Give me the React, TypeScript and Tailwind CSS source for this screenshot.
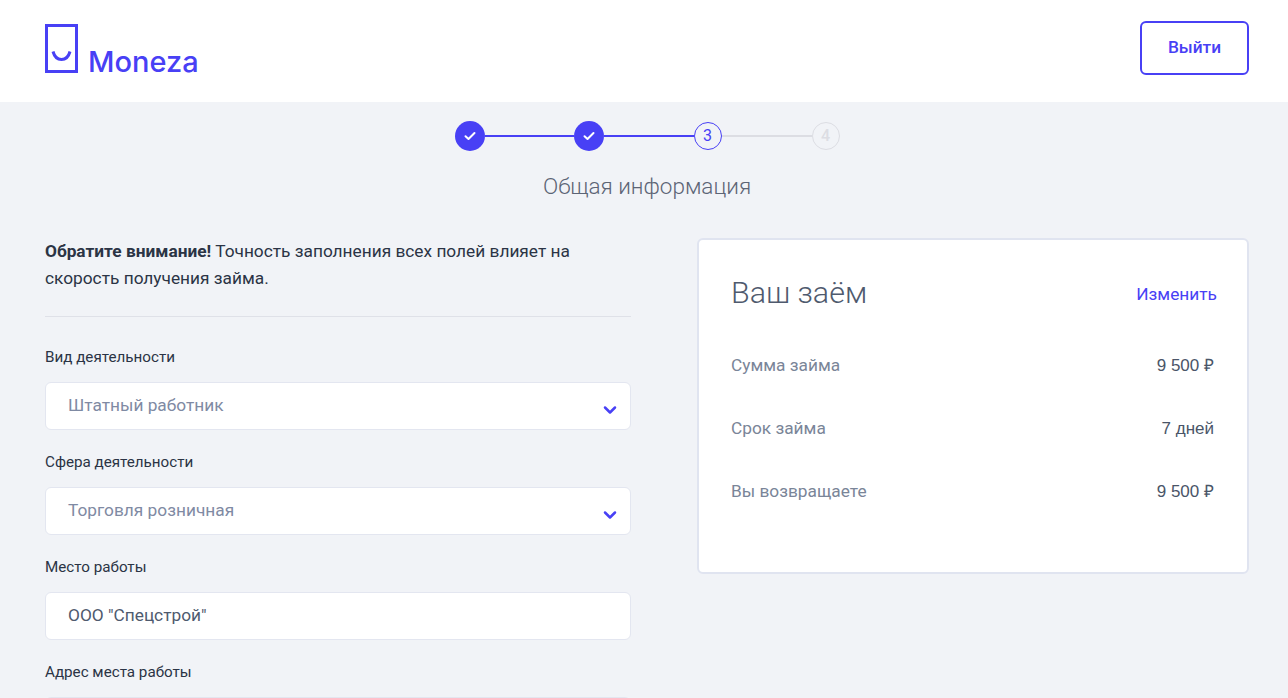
import { ChevronDown } from "lucide-react";

const Check = () => (
  <svg width="12" height="10" viewBox="0 0 12 10" fill="none">
    <path d="M1.5 5.2 4.5 8l6-6" stroke="#fff" strokeWidth="2" strokeLinecap="round" strokeLinejoin="round" />
  </svg>
);

const Logo = () => (
  <div className="flex items-end">
    <svg width="34" height="50" viewBox="0 0 34 50" fill="none" className="block">
      <rect x="1.500" y="1.500" width="30" height="46" stroke="#4840f5" strokeWidth="3" />
      <path d="M8 27.500c1.500 5.500 4.500 8 8.500 8s7-2.500 8.500-8" stroke="#4840f5" strokeWidth="3" />
    </svg>
    <span className="ml-[9px] mb-[-5px] text-[29px] leading-[34px] font-medium text-[#4840f5] font-['Inter',sans-serif]">Moneza</span>
  </div>
);

const Field = ({ label, value, select }: { label: string; value: string; select?: boolean }) => (
  <div>
    <div className="h-[22px] text-[15.2px] leading-[22px] text-[#2b3445]">{label}</div>
    <div className="mt-[14px] flex h-[48px] items-center justify-between rounded-[6px] border border-[#e3e6f0] bg-white pl-[22px] pr-[10px]">
      <span className={select ? "text-[17.3px] text-[#7f8aa3]" : "text-[17.3px] text-[#4f5a6e]"}>{value}</span>
      {select && <ChevronDown className="mt-[8px] h-[20px] w-[20px] text-[#4840f5]" strokeWidth={3} />}
    </div>
  </div>
);

const Row = ({ label, value }: { label: string; value: string }) => (
  <div className="flex h-[63px] items-center justify-between pr-[3px]">
    <span className="text-[17.3px] text-[#7a8598]">{label}</span>
    <span className="font-['Liberation_Sans',sans-serif] text-[17px] text-[#4a5568]">{value}</span>
  </div>
);

export default function App() {
  return (
    <div className="h-[698px] overflow-hidden bg-[#f1f3f7] font-['Roboto',sans-serif]">
      <header className="flex h-[102px] items-start justify-between bg-white pl-[45px] pr-[39px]">
        <div className="mt-[24px]"><Logo /></div>
        <button className="mt-[21px] h-[54px] w-[109px] rounded-[6px] border-2 border-[#4840f5] bg-white text-[17.3px] font-medium text-[#4840f5]">
          Выйти
        </button>
      </header>

      <main className="pl-[45px] pr-[39px]">
        <div className="mt-[19px] flex items-center justify-center">
          <div className="flex h-[30px] w-[30px] items-center justify-center rounded-full bg-[#4840f5]"><Check /></div>
          <div className="h-[2px] w-[89px] bg-[#4840f5]" />
          <div className="flex h-[30px] w-[30px] items-center justify-center rounded-full bg-[#4840f5]"><Check /></div>
          <div className="h-[2px] w-[90px] bg-[#4840f5]" />
          <div className="flex h-[28px] w-[28px] items-center justify-center rounded-full border border-[#4840f5] text-[16px] text-[#4840f5]">3</div>
          <div className="h-[2px] w-[90px] bg-[#dcdde3]" />
          <div className="flex h-[28px] w-[28px] items-center justify-center rounded-full border border-[#dcdde3] text-[16px] font-medium text-[#dcdde3]">4</div>
        </div>

        <h1 className="mt-[20px] text-center text-[22.5px] leading-[30px] font-light text-[#5c6475]">Общая информация</h1>

        <div className="mt-[37px] flex items-start justify-between">
          <div className="w-[586px]">
            <p className="text-[17.3px] leading-[27px] text-[#2b3445]">
              <b className="font-bold">Обратите внимание!</b> Точность заполнения всех полей влияет на скорость получения займа.
            </p>
            <div className="mt-[24px] h-px bg-[#dfe1e8]" />
            <div className="mt-[29px] flex flex-col gap-[21px]">
              <Field label="Вид деятельности" value="Штатный работник" select />
              <Field label="Сфера деятельности" value="Торговля розничная" select />
              <Field label="Место работы" value='ООО "Спецстрой"' />
              <Field label="Адрес места работы" value="" />
            </div>
          </div>

          <aside className="h-[336px] w-[552px] rounded-[6px] border-2 border-[#e0e4f0] bg-white pl-[32px] pr-[30px]">
            <div className="mt-[33px] flex items-center justify-between">
              <h2 className="text-[30.4px] leading-[40px] font-light text-[#4f5a6e]">Ваш заём</h2>
              <a className="mt-[4px] text-[17.3px] text-[#4840f5]">Изменить</a>
            </div>
            <div className="mt-[21px]">
              <Row label="Сумма займа" value="9 500 ₽" />
              <Row label="Срок займа" value="7 дней" />
              <Row label="Вы возвращаете" value="9 500 ₽" />
            </div>
          </aside>
        </div>
      </main>
    </div>
  );
}
